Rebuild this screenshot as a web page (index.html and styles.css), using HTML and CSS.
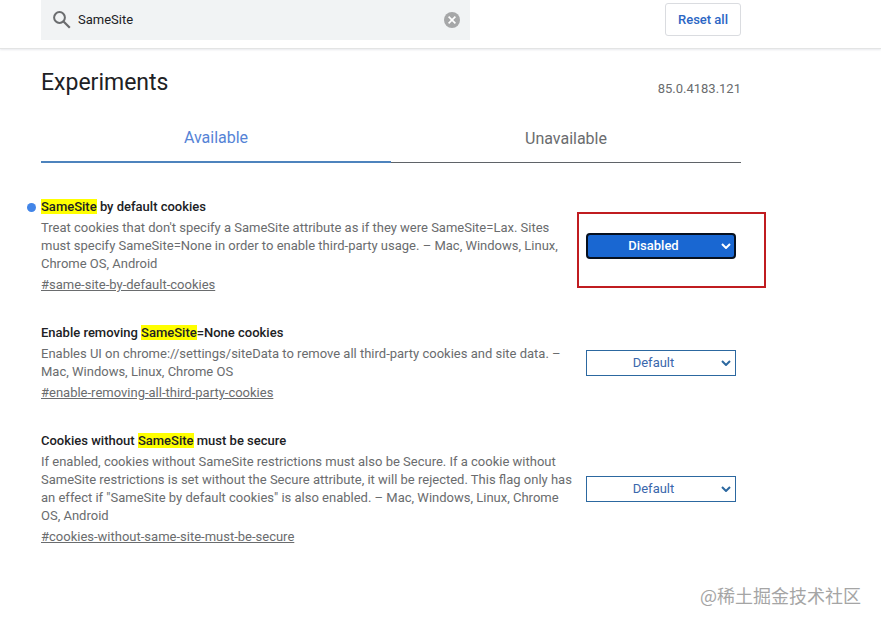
FILE: index.html
```html
<!DOCTYPE html>
<html lang="en">
<head>
<meta charset="utf-8">
<meta name="viewport" content="width=device-width, initial-scale=1">
<title>Experiments</title>
<link rel="stylesheet" href="styles.css">
</head>
<body>
<header class="top-bar">
  <div class="content top-bar-content">
    <div class="search">
      <svg class="search-icon" viewBox="0 0 18 18" aria-hidden="true"><circle cx="6.5" cy="6.5" r="5.4" fill="none" stroke="currentColor" stroke-width="2"/><path d="M10.5 10.5l6.3 6.3" fill="none" stroke="currentColor" stroke-width="2.2"/></svg>
      <input class="search-input" type="text" value="SameSite" aria-label="Search flags">
      <button class="clear" type="button" aria-label="Clear search">
        <svg class="clear-icon" viewBox="0 0 16 16" aria-hidden="true"><circle cx="8" cy="8" r="8" fill="#a6a7a8"/><path d="M4.6 4.6l6.8 6.8M11.4 4.6l-6.8 6.8" stroke="#fff" stroke-width="1.6"/></svg>
      </button>
    </div>
    <button class="reset" type="button">Reset all</button>
  </div>
</header>
<main class="content">
  <div class="heading">
    <h1 class="title">Experiments</h1>
    <span class="version">85.0.4183.121</span>
  </div>
  <div class="tabs" role="tablist">
    <button class="tab tab-selected" type="button" role="tab" aria-selected="true">Available</button>
    <button class="tab" type="button" role="tab" aria-selected="false">Unavailable</button>
  </div>
  <div class="flags">
    <section class="flag">
      <div class="flag-text">
        <h2 class="flag-name flag-changed"><label for="flag-default"><mark>SameSite</mark> by default cookies</label></h2>
        <p class="flag-description">Treat cookies that don't specify a SameSite attribute as if they were SameSite=Lax. Sites must specify SameSite=None in order to enable third-party usage. – Mac, Windows, Linux, Chrome OS, Android</p>
        <a class="permalink" href="#same-site-by-default-cookies">#same-site-by-default-cookies</a>
      </div>
      <div class="control control-outlined">
        <select class="select select-changed" id="flag-default"><option>Default</option><option>Enabled</option><option selected>Disabled</option></select>
        <svg class="arrow arrow-changed" viewBox="0 0 10 6" aria-hidden="true"><path d="M1 1l4 4 4-4" fill="none" stroke="currentColor" stroke-width="2"/></svg>
      </div>
    </section>
    <section class="flag">
      <div class="flag-text">
        <h2 class="flag-name"><label for="flag-removing">Enable removing <mark>SameSite</mark>=None cookies</label></h2>
        <p class="flag-description">Enables UI on chrome://settings/siteData to remove all third-party cookies and site data. – Mac, Windows, Linux, Chrome OS</p>
        <a class="permalink" href="#enable-removing-all-third-party-cookies">#enable-removing-all-third-party-cookies</a>
      </div>
      <div class="control">
        <select class="select" id="flag-removing"><option selected>Default</option><option>Enabled</option><option>Disabled</option></select>
        <svg class="arrow" viewBox="0 0 10 6" aria-hidden="true"><path d="M1 1l4 4 4-4" fill="none" stroke="currentColor" stroke-width="2"/></svg>
      </div>
    </section>
    <section class="flag">
      <div class="flag-text">
        <h2 class="flag-name"><label for="flag-secure">Cookies without <mark>SameSite</mark> must be secure</label></h2>
        <p class="flag-description">If enabled, cookies without SameSite restrictions must also be Secure. If a cookie without SameSite restrictions is set without the Secure attribute, it will be rejected. This flag only has an effect if "SameSite by default cookies" is also enabled. – Mac, Windows, Linux, Chrome OS, Android</p>
        <a class="permalink" href="#cookies-without-same-site-must-be-secure">#cookies-without-same-site-must-be-secure</a>
      </div>
      <div class="control">
        <select class="select" id="flag-secure"><option selected>Default</option><option>Enabled</option><option>Disabled</option></select>
        <svg class="arrow" viewBox="0 0 10 6" aria-hidden="true"><path d="M1 1l4 4 4-4" fill="none" stroke="currentColor" stroke-width="2"/></svg>
      </div>
    </section>
  </div>
</main>
<footer class="credit" lang="zh-CN">@稀土掘金技术社区</footer>
</body>
</html>
```
FILE: styles.css
```css
* {
  box-sizing: border-box;
}

body {
  display: flex;
  flex-direction: column;
  min-height: 100vh;
  margin: 0;
  background: #fff;
  color: #202124;
  font-family: Roboto, "Liberation Sans", sans-serif;
  font-size: 13px;
  line-height: 18px;
}

button,
input,
select {
  font: inherit;
}

.content {
  width: calc(100% - 82px);
  max-width: 700px;
  margin-left: 41px;
}

.top-bar {
  padding-bottom: 8px;
  border-bottom: 1px solid #e3e4e4;
  box-shadow: 0 1px 2px #e8eaed;
}

.top-bar-content {
  display: flex;
  align-items: flex-start;
  justify-content: space-between;
  gap: 24px;
}

.search {
  display: flex;
  flex: 0 1 429px;
  align-items: center;
  gap: 7px;
  height: 40px;
  padding: 0 10px 0 12px;
  background: #f1f3f4;
}

.search-icon {
  width: 18px;
  height: 18px;
  color: #6a6c6e;
}

.search-input {
  flex: 1;
  min-width: 0;
  padding: 0;
  border: 0;
  outline: 0;
  background: transparent;
  color: #202124;
}

.clear {
  display: flex;
  padding: 0;
  border: 0;
  background: none;
}

.clear-icon {
  width: 16px;
  height: 16px;
}

.reset {
  height: 33px;
  margin-top: 3px;
  padding: 0 12px;
  border: 1px solid #dadce0;
  border-radius: 3px;
  background: #fff;
  color: #2b66c4;
  font-weight: 500;
}

.heading {
  display: flex;
  align-items: flex-end;
  justify-content: space-between;
  padding-top: 19px;
}

.title {
  margin: 0;
  font-size: 23px;
  font-weight: 400;
  line-height: 30px;
}

.version {
  color: #6a6c6e;
}

.tabs {
  display: flex;
  margin-top: 15px;
}

.tab {
  flex: 1;
  height: 50px;
  padding: 2px 0 0;
  border: 0;
  border-bottom: 1px solid #5f6368;
  background: none;
  color: #6a6c6e;
  font-size: 16px;
}

.tab-selected {
  border-bottom: 2px solid #4d83bd;
  color: #5583d6;
}

.flags {
  display: flex;
  flex-direction: column;
  gap: 30px;
  padding-top: 35px;
}

.flag {
  display: flex;
  align-items: center;
  gap: 10px;
  padding-right: 5px;
}

.flag-text {
  flex: 1;
  color: #6a6c6e;
}

.flag-name {
  position: relative;
  margin: 0;
  color: #202124;
  font-size: 13px;
  font-weight: 500;
}

.flag-changed::before {
  content: "";
  position: absolute;
  top: 5px;
  left: -14px;
  width: 9px;
  height: 9px;
  border-radius: 50%;
  background: #4285e8;
}

mark {
  background: #ff0;
  color: inherit;
}

.flag-description {
  margin: 3px 0;
}

.permalink {
  display: block;
  width: fit-content;
  color: inherit;
  text-decoration: underline;
}

.control {
  position: relative;
  flex: 0 0 150px;
}

.control-outlined::after {
  content: "";
  position: absolute;
  inset: -21px -30px -29px -9px;
  border: 2px solid #c01c20;
  pointer-events: none;
}

.select {
  display: block;
  appearance: none;
  width: 100%;
  height: 26px;
  padding: 0 15px 0 0;
  border: 1px solid #2c68a0;
  border-radius: 0;
  background: #fff;
  color: #3a67ac;
  text-align: center;
  text-align-last: center;
}

.select-changed {
  border: 2px solid #06101f;
  border-radius: 4px;
  background: #1967d2;
  color: #fff;
  font-weight: 500;
}

.arrow {
  position: absolute;
  top: 10px;
  right: 5px;
  width: 10px;
  height: 6px;
  color: #2c68a0;
  pointer-events: none;
}

.arrow-changed {
  color: #fff;
}

.credit {
  margin-top: auto;
  padding: 24px 20px 16px;
  color: #a5a5a5;
  font-family: "Noto Sans CJK SC", sans-serif;
  font-size: 18px;
  line-height: 28px;
  text-align: right;
}
```
